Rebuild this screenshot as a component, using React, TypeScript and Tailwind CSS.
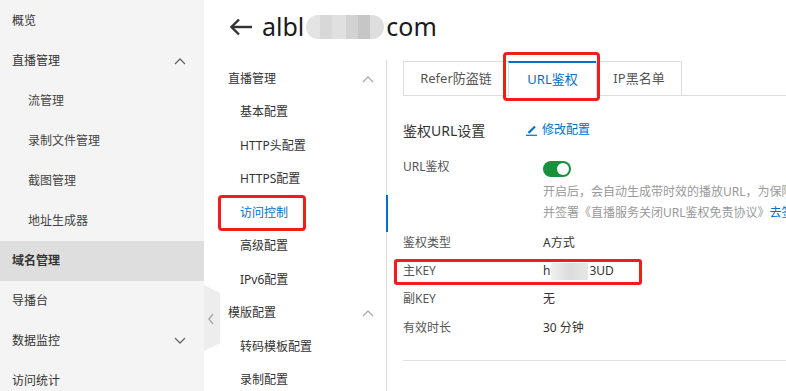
const font = "font-['Noto_Sans','Noto_Sans_CJK_SC',sans-serif]";

const Chevron = ({ dir, color }: { dir: "up" | "down"; color: string }) => (
  <svg width="12" height="8" viewBox="0 0 12 8" fill="none">
    <polyline
      points={dir === "up" ? "1,7 6,2 11,7" : "1,1 6,6 11,1"}
      stroke={color}
      strokeWidth="1.3"
    />
  </svg>
);

const sideItems = [
  { t: "概览" },
  { t: "直播管理", chev: "up" as const },
  { t: "流管理", sub: true },
  { t: "录制文件管理", sub: true },
  { t: "截图管理", sub: true },
  { t: "地址生成器", sub: true },
  { t: "域名管理", active: true },
  { t: "导播台" },
  { t: "数据监控", chev: "down" as const },
  { t: "访问统计" },
];

const navItems = [
  { t: "直播管理", head: true },
  { t: "基本配置" },
  { t: "HTTP头配置" },
  { t: "HTTPS配置" },
  { t: "访问控制", active: true },
  { t: "高级配置" },
  { t: "IPv6配置" },
  { t: "模版配置", head: true },
  { t: "转码模板配置" },
  { t: "录制配置" },
];

const Sidebar = () => (
  <aside className="w-[204px] shrink-0 bg-[#f4f4f4] pt-px">
    {sideItems.map((it) => (
      <div
        key={it.t}
        className={`flex h-10 items-center justify-between pr-[18px] text-[12px] ${
          it.sub ? "pl-7 text-[#444]" : "pl-3 text-[#333]"
        } ${it.active ? "bg-[#dedede] font-bold text-[#222]" : ""}`}
      >
        <span>{it.t}</span>
        {it.chev && <Chevron dir={it.chev} color="#666" />}
      </div>
    ))}
  </aside>
);

const SecondNav = () => (
  <nav className="w-[183px] shrink-0 border-r border-[#dcdcdc] pt-[2px]">
    {navItems.map((it) => (
      <div
        key={it.t}
        className={`relative flex h-[33.5px] items-center justify-between pr-3 text-[12px] ${
          it.head ? "pl-6 text-[#333]" : "pl-9"
        } ${it.active ? "text-[#0070cc]" : it.head ? "" : "text-[#333]"}`}
      >
        <span>{it.t}</span>
        {it.head && <Chevron dir="up" color="#aaa" />}
        {it.active && (
          <>
            <span className="absolute -right-[2px] top-[-1.5px] h-[37px] w-[2px] bg-[#0070cc]" />
            <span className="absolute left-[14px] top-[-1px] h-[36px] w-[88px] rounded-[4px] border-[3px] border-[#f31c1c]" />
          </>
        )}
      </div>
    ))}
  </nav>
);

const Row = ({ label, children, boxed }: { label: string; children: React.ReactNode; boxed?: boolean }) => (
  <div className="relative flex h-[28.4px] items-center text-[12px]">
    <span className="w-[140px] text-[#555]">{label}</span>
    <span className="text-[#333]">{children}</span>
    {boxed && (
      <span className="absolute -left-[9px] top-[2px] h-[26px] w-[248px] rounded-[3px] border-[3px] border-[#f31c1c]" />
    )}
  </div>
);

const Content = () => (
  <section className="min-w-0 flex-1 pl-4 pt-px">
    {/* TABS */}
    <div className="flex h-[35px] border-b border-[#ddd] text-[13px]">
      <div className="flex w-[105px] items-center justify-center border-l border-t border-[#ddd] text-[#555]">
        Refer防盗链
      </div>
      <div className="relative -mb-px flex w-[88px] items-center justify-center border-l border-t-2 border-l-[#ddd] border-t-[#0070cc] bg-white text-[#0070cc]">
        URL鉴权
        <span className="absolute -bottom-[5px] -left-[6px] -right-[4px] -top-[11px] rounded-[4px] border-[3px] border-[#f31c1c]" />
      </div>
      <div className="flex w-[86px] items-center justify-center border-l border-r border-t border-[#ddd] text-[#555]">
        IP黑名单
      </div>
    </div>

    {/* HEADING */}
    <div className="mt-6 flex h-5 items-center">
      <span className="w-[123px] text-[14px] text-[#333]">鉴权URL设置</span>
      <svg width="12" height="12" viewBox="0 0 12 12" className="mr-[4px]">
        <line x1="2.5" y1="9" x2="9" y2="2.5" stroke="#0070cc" strokeWidth="2.2" />
        <line x1="0" y1="11.3" x2="11" y2="11.3" stroke="#0070cc" strokeWidth="1.2" />
      </svg>
      <span className="text-[12px] text-[#0070cc]">修改配置</span>
    </div>

    {/* URL AUTH */}
    <div className="mt-[17px] flex text-[12px]">
      <span className="w-[140px] shrink-0 leading-5 text-[#555]">URL鉴权</span>
      <div className="min-w-0">
        <div className="mt-[4px] flex h-4 w-7 items-center justify-end rounded-full bg-[#1a8f3c] pr-[2px]">
          <span className="h-3 w-3 rounded-full bg-white" />
        </div>
        <p className="mt-[4px] whitespace-nowrap leading-[21px] text-[#999]">
          开启后，会自动生成带时效的播放URL，为保障直播内容安全，建议开启
          <br />
          并签署《直播服务关闭URL鉴权免责协议》<span className="text-[#0070cc]">去签署</span>
        </p>
      </div>
    </div>

    <div className="mt-[5.5px]">
      <Row label="鉴权类型">A方式</Row>
      <Row label="主KEY" boxed>
        <span className="flex items-center">
          h
          <span className="mx-px inline-block h-[17px] w-[37px] bg-gradient-to-r from-[#f0f0f0] via-[#dcdcdc] to-[#e6e6e6]" />
          3UD
        </span>
      </Row>
      <Row label="副KEY">无</Row>
      <Row label="有效时长">30 分钟</Row>
    </div>

    <div className="mt-[18px] border-t border-[#e0e0e0]" />
  </section>
);

const App = () => {
  return (
    <main className={`flex h-[391px] w-[786px] overflow-hidden bg-white ${font}`}>
      <Sidebar />

      <div className="relative flex min-w-0 flex-1 flex-col">
        {/* TITLE */}
        <div className="flex h-[60px] shrink-0 items-center gap-[9px] pb-[6px] pl-[25px] text-[25px] text-[#1a1a1a]">
          <svg width="24" height="18" viewBox="0 0 24 18" fill="none">
            <line x1="2" y1="9" x2="23" y2="9" stroke="#333" strokeWidth="2.4" />
            <polyline points="10,1.5 2.5,9 10,16.5" stroke="#333" strokeWidth="2.4" />
          </svg>
          <span className="flex items-center">
            albl
            <span className="mx-[2px] flex h-[24px] w-[78px] overflow-hidden rounded-full">
              <span className="w-[14px] bg-[#e4e4e4]" />
              <span className="w-[12px] bg-[#d8d8d8]" />
              <span className="w-[14px] bg-[#e0e0e0]" />
              <span className="w-[12px] bg-[#d2d2d2]" />
              <span className="w-[12px] bg-[#c6c6c6]" />
              <span className="w-[14px] bg-[#dedede]" />
            </span>
            com
          </span>
        </div>

        <div className="flex min-h-0 flex-1">
          <SecondNav />
          <Content />
        </div>

        {/* COLLAPSE HANDLE */}
        <svg width="16" height="66" viewBox="0 0 16 66" className="absolute left-0 top-[285px]">
          <polygon points="0,0 16,8 16,58 0,66" fill="#ededed" />
          <polyline points="9,29 5,34 9,39" stroke="#aaa" strokeWidth="1.5" fill="none" />
        </svg>
      </div>
    </main>
  );
};

export default App;
